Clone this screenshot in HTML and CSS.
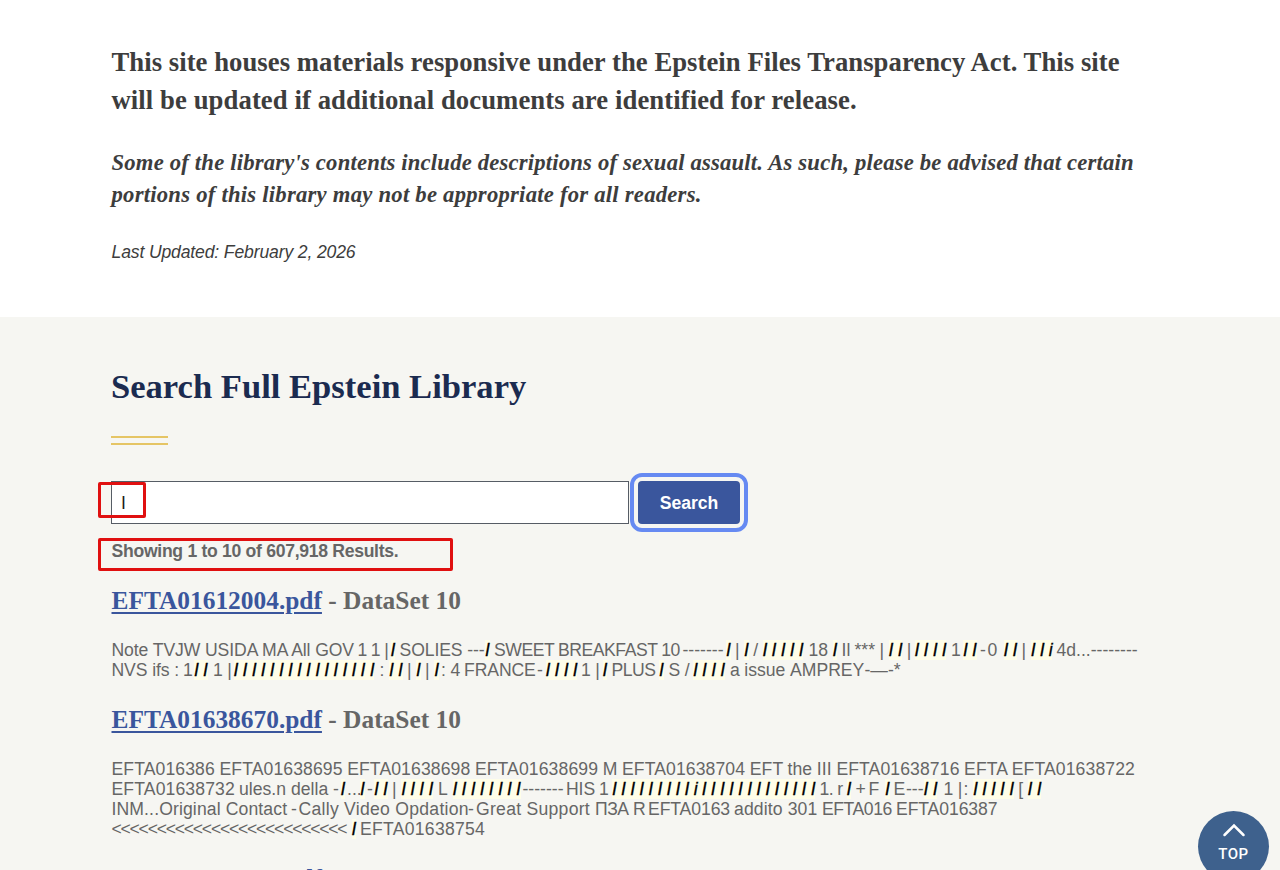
FILE: index.html
```
<!DOCTYPE html>
<html lang="en">
<head>
<meta charset="utf-8">
<title>Epstein Library</title>
<link rel="stylesheet" href="styles.css">
</head>
<body>
<main class="page">
  <section class="intro">
    <h3 class="lead"><span class="ln lead-1">This site houses materials responsive under the Epstein Files Transparency Act. This site</span><span class="ln lead-2">will be updated if additional documents are identified for release.</span></h3>
    <h4 class="advisory"><span class="ln adv-1">Some of the library's contents include descriptions of sexual assault. As such, please be advised that certain</span><span class="ln adv-2">portions of this library may not be appropriate for all readers.</span></h4>
    <p class="updated">Last Updated: February 2, 2026</p>
  </section>
  <section class="library">
    <h2 class="title">Search Full Epstein Library</h2>
    <div class="rule"></div>
    <form class="search">
      <div class="field">I</div>
      <button class="button" type="button">Search</button>
      <div class="outline outline-query"></div>
      <div class="outline outline-count"></div>
    </form>
    <p class="count">Showing 1 to 10 of 607,918 Results.</p>
    <article class="result">
      <h3 class="name"><a class="link" href="#">EFTA01612004.pdf</a> - DataSet 10</h3>
      <div class="text">
        <div class="row a1"><span class="snug">Note TVJW USIDA MA All GOV</span><span class="tight">1 1 |</span><span><em>I</em></span><span class="snug">SOLIES ---</span><span><em>I</em></span><span class="tight">SWEET BREAKFAST 10</span><span>-------</span><span><em>I</em> | <em>I</em> / <em>I I I I I</em></span><span>18 <em>I</em> Il</span><span>*** | <em>I I</em> |</span><span><em>I I I I</em></span><span>1</span><span><em>I I</em></span><span>-</span><span>0</span><span><em>I I</em> | <em>I I i</em></span><span>4d...--------</span></div>
        <div class="row a2"><span class="snug">NVS ifs :</span><span>1</span><span><em>I I</em></span><span>1 |</span><span><em>I I I I I I I I I I I I I I I I</em></span><span>: <em>I I</em> | <em>I</em> | <em>I</em></span><span>: 4</span><span class="snug">FRANCE</span><span>-</span><span><em>I I I I</em></span><span>1 |</span><span><em>I</em></span><span class="tight">PLUS</span><span><em>I</em></span><span>S /</span><span><em>I I I I</em></span><span>a issue</span><span>AMPREY</span><span>-—-*</span></div>
      </div>
    </article>
    <article class="result">
      <h3 class="name"><a class="link" href="#">EFTA01638670.pdf</a> - DataSet 10</h3>
      <div class="text">
        <div class="row b1"><span>EFTA016386 EFTA01638695 EFTA01638698 EFTA01638699 M EFTA01638704 EFT the III EFTA01638716 EFTA EFTA01638722</span></div>
        <div class="row b2"><span class="wide">EFTA01638732</span><span>ules.n</span><span>della</span><span>-</span><span><em>I</em></span><span>...</span><span><em>I</em></span><span>-</span><span><em>I I</em> | <em>I I I I</em></span><span>L</span><span><em>I I I I I I I I</em></span><span>-------</span><span class="snug">HIS</span><span>1</span><span><em>I I I I I I I I I i I I I I I I I I I I I I I</em></span><span class="tight">1. r</span><span><em>I</em></span><span>+</span><span>F</span><span><em>I</em></span><span>E</span><span>---<em>I I</em></span><span>1 |</span><span>: <em>I I I I I</em> [ <em>I I</em></span></div>
        <div class="row b3"><span class="wide">INM...Original Contact</span><span>-</span><span class="open">Cally Video Opdation</span><span>-</span><span class="open">Great Support</span><span class="tight">ПЗА R</span><span class="snug">EFTA0163</span><span class="wide">addito 301</span><span class="tight">EFTA016</span><span class="snug">EFTA016387</span></div>
        <div class="row b4"><span class="arrows">&lt;&lt;&lt;&lt;&lt;&lt;&lt;&lt;&lt;&lt;&lt;&lt;&lt;&lt;&lt;&lt;&lt;&lt;&lt;&lt;&lt;&lt;&lt;&lt;&lt;&lt;</span><span><em>I</em></span><span class="open">EFTA01638754</span></div>
      </div>
    </article>
    <article class="result">
      <h3 class="name"><a class="link" href="#">EFTA01656524.pdf</a> - DataSet 10</h3>
    </article>
  </section>
  <a class="top" href="#"><svg class="chevron" viewBox="0 0 24 14"><path d="M2.5 12 12 2.5 21.5 12"/></svg><span>TOP</span></a>
</main>
</body>
</html>
```
FILE: styles.css
```
* { box-sizing: border-box; }
body { margin: 0; background: #fff; color: #3d3d3d; font-family: "Liberation Sans", Arial, sans-serif; }
.page { position: relative; height: 870px; overflow: hidden; }
.ln { display: block; white-space: nowrap; width: max-content; }
.intro { height: 317px; padding: 43px 0 0 111.5px; }
.lead, .advisory, .title, .name { margin: 0; font-family: "Liberation Serif", "Times New Roman", serif; font-weight: 700; }
.lead { font-size: 26.7px; line-height: 38px; }
.lead-1 { letter-spacing: .04px; }
.lead-2 { letter-spacing: .08px; }
.advisory { margin-top: 28px; font-size: 22.7px; line-height: 32px; font-style: italic; }
.adv-1 { letter-spacing: .18px; }
.adv-2 { letter-spacing: .23px; }
.updated { margin: 29px 0 0; font-size: 17.6px; line-height: 24px; font-style: italic; letter-spacing: -.15px; }
.library { height: 553px; padding: 45px 0 0 111px; background: #f6f6f2; color: #666; }
.title { font-size: 34.6px; line-height: 48px; color: #1b2b50; }
.rule { width: 57px; height: 9px; margin-top: 26px; border-top: 2px solid #e5c565; border-bottom: 2px solid #e5c565; }
.search { position: relative; display: flex; gap: 9px; margin-top: 36px; }
.field { width: 518px; height: 43px; padding: 0 9px; border: 1px solid #565c65; background: #fff; color: #1b1b1b; font-size: 17.6px; line-height: 42px; }
.button { width: 102px; height: 43px; padding: 2px 0 0; border: 0; border-radius: 4px; background: #3a569d; color: #fff; font: 700 17.6px/41px "Liberation Sans", Arial, sans-serif; outline: 4px solid #668af2; outline-offset: 4px; }
.outline { position: absolute; left: -13px; border: 3px solid #e01010; border-radius: 2px; }
.outline-query { top: 1px; width: 48px; height: 36px; }
.outline-count { top: 57px; width: 355px; height: 33px; }
.count { margin: 15px 0 0 .6px; font-size: 17.6px; line-height: 24px; font-weight: 700; letter-spacing: -.3px; }
.result { height: 119px; }
.result + .result { height: 159px; }
.count + .result { margin-top: 20px; }
.name { padding-left: .5px; font-size: 25.4px; line-height: 34px; }
.link { color: #3a569d; text-decoration: underline; text-decoration-thickness: 2px; text-underline-offset: 3px; }
.text { margin: 23px 0 0; padding-left: .5px; font-size: 17.6px; line-height: 20px; }
.row { display: grid; height: 20px; white-space: nowrap; word-spacing: -.4px; }
.text em { background: #fffee8; color: #000; font-weight: 400; -webkit-text-stroke: .3px #000; letter-spacing: -.35px; word-spacing: 0; }
.snug { letter-spacing: -.1px; word-spacing: 0; }
.tight { letter-spacing: -.46px; }
.wide { letter-spacing: .12px; }
.open { letter-spacing: .27px; }
.arrows { letter-spacing: -1.24px; }
.a1 { grid-template-columns: 246px 33px 9px 85.5px 9px 188.5px 43.5px 82.5px 46px 60px 36.5px 12px 17px 7.5px 16px 53px 90px; }
.a2 { grid-template-columns: 71.5px 11px 19px 20.5px 146px 61.5px 23px 73px 8.5px 35.5px 21.5px 9px 47.5px 9.5px 24.5px 37px 60px 74.5px 40px; }
.b1 { letter-spacing: .1px; }
.b2 { grid-template-columns: 127.5px 52px 42px 7.5px 6.5px 13px 7px 7px 64px 14.5px 70px 43.5px 33px 13px 207.5px 27px 9px 13px 16.5px 8.5px 12.5px 37.5px 20px 90px; }
.b3 { grid-template-columns: 179.5px 7.5px 169.5px 8px 119px 53px 86px 88px 74px 110px; word-spacing: 0; }
.b4 { grid-template-columns: 240px 8.5px 130px; }
.top { position: absolute; left: 1198px; top: 811px; width: 71px; height: 71px; display: flex; flex-direction: column; align-items: center; padding-top: 12px; border-radius: 50%; background: #3e618d; color: #fff; font: 500 15px/20px Roboto, "Liberation Sans", sans-serif; letter-spacing: .5px; text-decoration: none; }
.chevron { width: 24px; height: 14px; margin-bottom: 7px; fill: none; stroke: #fff; stroke-width: 2.5; stroke-linecap: round; }
```
